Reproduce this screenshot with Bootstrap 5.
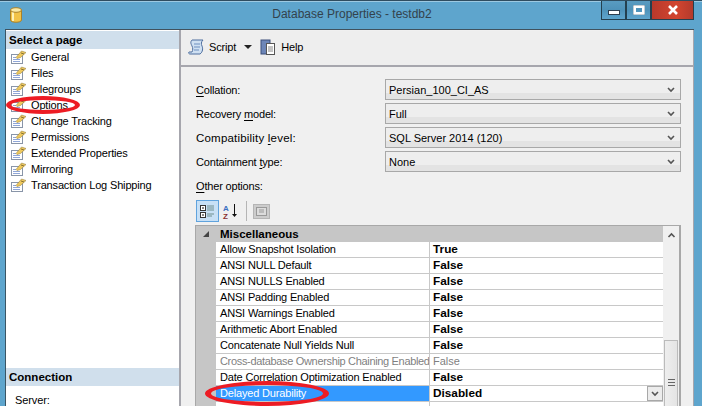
<!DOCTYPE html>
<html lang="en">
<head>
<meta charset="utf-8">
<title>Database Properties - testdb2</title>
<link href="https://cdn.jsdelivr.net/npm/bootstrap@5.3.0/dist/css/bootstrap.min.css" rel="stylesheet">
<style>
html,body{margin:0;height:100%;overflow:hidden;background:#5ea5cd}
body{font:11.5px/16px "Liberation Sans",Arial,sans-serif;color:#000}
.ssms-win{width:702px;height:406px;position:relative;overflow:hidden;background:#5ea5cd;border-top:1px solid #2f4d60;box-shadow:inset 0 1px 0 #9cc9e2}
.ssms-title{height:28px;position:relative;padding-left:10px}
.ssms-cyl{position:absolute;left:10px;top:6px;display:block}
.ssms-title-text{position:absolute;left:2px;right:0;top:5px;text-align:center;font-size:12px;color:#33424c}
.ssms-btns{position:absolute;right:8px;top:-1px;height:20px}
.ssms-btn{height:20px;border:1px solid #24404f;border-top:0;display:flex;align-items:center;justify-content:center}
.ssms-btn-plain{width:25px;background:linear-gradient(#5b9dc2,#4e92b9 50%,#5ea5cd)}
.ssms-btn-close{width:43px;background:linear-gradient(90deg,#b8392b,#d2452f 60%,#b33a2c)}
.ssms-min{margin-top:6px}
.ssms-client{margin-left:5px;width:689px;height:377px;background:#f0f0f0;border-left:1px solid #3a5564;border-top:1px solid #40525e;overflow:hidden}
.ssms-side{width:175px;background:#fff;border-right:2px solid #a6a6ad;flex:none;height:100%;display:flex;flex-direction:column;padding-top:1px}
.ssms-head{height:18px;background:#d0dfec;font-weight:700;font-size:11.5px;line-height:18px;padding-left:3px;flex:none}
.ssms-pages{flex:1;font-size:11px;letter-spacing:-.16px}
.ssms-page{height:16px;display:flex;align-items:center;padding-left:4px;gap:4px;white-space:nowrap}
.ssms-main{flex:1;min-width:0;height:100%;border-right:1px solid #a6a6ad}
.ssms-tools{height:36px;background:#eee;border-bottom:2px solid #a6a6ad;display:flex;align-items:center;padding:0 0 2px 7px;margin-top:1px;font-size:11px;letter-spacing:-.16px}
.ssms-form{padding:12px 12px 0 15px;position:relative}
.ssms-field{height:24px;display:flex;align-items:flex-start}
.ssms-field label{width:189px;flex:none;line-height:22px;margin:0;font-size:11px;letter-spacing:-.17px}
.ssms-field label.ssms-wide{font-size:11.5px;letter-spacing:.2px}
.ssms-select{width:296px;height:21px;background:linear-gradient(#eee 70%,#e3e3e3 70%);border:1px solid #a8a8a8;display:flex;align-items:center;justify-content:space-between;padding:0 5px 0 3px;font-size:11px}
.ssms-other{margin-top:3px;line-height:16px;font-size:11px;letter-spacing:-.17px}
.ssms-gridtools{height:22px;display:flex;align-items:center;margin-top:6px;gap:3px}
.ssms-tbtn{width:23px;height:22px;background:#c7e0f6;border:1px solid #60a3dd;display:flex;align-items:center;justify-content:center}
.ssms-sep{width:1px;height:20px;background:#b5b5b5;margin:0 3px}
.ssms-grid{width:486px;height:200px;margin-left:-1px;border:1px solid #a8a8a8;border-right-width:2px;border-bottom:0;margin-top:3px;display:flex;background:#fff;position:relative;overflow:hidden}
.ssms-gridbody{width:467px;flex:none}
.ssms-ghead{height:16px;background:#c6c6c6;display:flex;align-items:center;font-weight:700;line-height:16px}
.ssms-ghead span{padding-left:4px}
.ssms-gutter{width:20px;flex:none;display:flex;justify-content:center;align-items:center}
.ssms-grow{height:16px;display:flex;background:#c6c6c6}
.ssms-gname{width:214px;flex:none;background:#fff;border-bottom:1px solid #c8c8c8;padding-left:4px;line-height:15px;white-space:nowrap;overflow:hidden;border-right:1px solid #c8c8c8;font-size:11px;letter-spacing:-.17px}
.ssms-gval{flex:1;background:#fff;border-bottom:1px solid #c8c8c8;padding-left:3px;line-height:15px;font-weight:700;position:relative;font-size:11.8px}
.ssms-dim{color:#7f7f7f;font-weight:400}
.ssms-gname.ssms-dim{letter-spacing:-.33px}
.ssms-gval.ssms-dim{font-size:11px}
.ssms-sel{background:#3399ff;color:#fff}
.ssms-dd{position:absolute;right:0;top:0;width:16px;height:15px;background:#ececec;border:1px solid #a8a8a8;display:flex;align-items:center;justify-content:center}
.ssms-scroll{flex:1;background:#f0f0f0;position:relative;display:flex;flex-direction:column;align-items:center}
.ssms-uparrow{margin-top:6px}
.ssms-thumb{position:absolute;left:1px;right:1px;top:114px;bottom:0;background:linear-gradient(90deg,#eee,#e4e4e4);border:1px solid #bbb;display:flex;align-items:center;justify-content:center}
.ssms-thumb b{display:block;width:7px;height:8px;background:repeating-linear-gradient(#666 0 1px,transparent 1px 3px)}
.ssms-oval{position:absolute;border:4px solid #ed1c24;border-radius:50%;pointer-events:none}
.ssms-oval-a{left:6px;top:95px;width:74px;height:18px;border-width:4px 5px}
.ssms-oval-b{left:205px;top:380px;width:124px;height:25px;border-width:4px 6px}
.ssms-conn{padding:6px 0 0 9px;height:20px;overflow:hidden;flex:none;font-size:11px;letter-spacing:-.1px}
u{text-underline-offset:2px}
</style>
</head>
<body>
<svg width="0" height="0" class="d-block position-absolute">
<symbol id="ic-page" viewBox="0 0 17 14">
<rect x="1.5" y="4.5" width="11" height="9" fill="#fff" stroke="#8995a8"/>
<path d="M3 7.5h3M3 9.5h7M3 11.5h7" stroke="#8fa6d8"/>
<path d="M6 7.5l5.5-6.500 4.500 1.500-5.500 5-3.500 1z" fill="#efc95e" stroke="#9a8444" stroke-width=".6"/>
<path d="M11 3l3 1" stroke="#6b5a2a" stroke-width=".8"/>
</symbol>
<symbol id="ic-chev" viewBox="0 0 8 6"><path d="M1 1l3 3 3-3" fill="none" stroke="#555" stroke-width="1.6"/></symbol>
</svg>
<div class="ssms-win">
  <div class="ssms-title">
    <svg width="12" height="16" viewBox="0 0 12 16" class="ssms-cyl"><path d="M.5 3v10c0 3 11 3 11 0V3z" fill="#f2c349" stroke="#a9812a"/><path d="M3 4v10" stroke="#fff2b8" stroke-width="2"/><ellipse cx="6" cy="3" rx="5.5" ry="2.3" fill="#fbe9a4" stroke="#a9812a"/></svg>
    <div class="ssms-title-text">Database Properties - testdb2</div>
    <div class="ssms-btns d-flex">
      <div class="ssms-btn ssms-btn-plain"><svg class="ssms-min" width="12" height="6" viewBox="0 0 12 6"><rect x=".5" y=".5" width="11" height="4" fill="#fff" stroke="#2f4050"/></svg></div>
      <div class="ssms-btn ssms-btn-plain"><svg width="12" height="10" viewBox="0 0 12 10"><rect x="1.500" y="1.500" width="9" height="7" fill="none" stroke="#fff" stroke-width="3"/><rect x="0" y="0" width="12" height="10" fill="none" stroke="#3a5a70" stroke-width=".6"/></svg></div>
      <div class="ssms-btn ssms-btn-close"><svg width="12" height="10" viewBox="0 0 12 10"><path d="M2 1l8 8M10 1L2 9" stroke="#fff" stroke-width="2.6"/></svg></div>
    </div>
  </div>
  <div class="ssms-client d-flex">
    <div class="ssms-side">
      <div class="ssms-head">Select a page</div>
      <div class="ssms-pages">
        <div class="ssms-page"><svg width="17" height="14"><use href="#ic-page"/></svg>General</div>
        <div class="ssms-page"><svg width="17" height="14"><use href="#ic-page"/></svg>Files</div>
        <div class="ssms-page"><svg width="17" height="14"><use href="#ic-page"/></svg>Filegroups</div>
        <div class="ssms-page"><svg width="17" height="14"><use href="#ic-page"/></svg>Options</div>
        <div class="ssms-page"><svg width="17" height="14"><use href="#ic-page"/></svg>Change Tracking</div>
        <div class="ssms-page"><svg width="17" height="14"><use href="#ic-page"/></svg>Permissions</div>
        <div class="ssms-page"><svg width="17" height="14"><use href="#ic-page"/></svg>Extended Properties</div>
        <div class="ssms-page"><svg width="17" height="14"><use href="#ic-page"/></svg>Mirroring</div>
        <div class="ssms-page"><svg width="17" height="14"><use href="#ic-page"/></svg>Transaction Log Shipping</div>
      </div>
      <div class="ssms-head">Connection</div>
      <div class="ssms-conn">Server:</div>
    </div>
    <div class="ssms-main">
      <div class="ssms-tools">
        <svg width="17" height="16" viewBox="0 0 17 16"><path d="M4 1h11c-2 2-2 4-1 6s1 6-2 8H2c-1 0-2-1-1-2h3c1-2 1-4 0-6S2 3 4 1z" fill="#cfe0f2" stroke="#4f6f9f"/><path d="M6 5h6M6 8h6M6 11h5" stroke="#6f8fbf"/></svg>
        <span class="ms-1">Script</span>
        <svg width="8" height="5" viewBox="0 0 8 5" class="ms-2 me-1"><path d="M0 0h8L4 4z" fill="#222"/></svg>
        <svg width="17" height="17" viewBox="0 0 17 17" class="ms-1"><rect x="1" y="1" width="9" height="14" fill="#6d86b8" stroke="#3d4f7a"/><rect x="6.500" y="4.500" width="8" height="11" fill="#fff" stroke="#555"/><path d="M8 8h5M8 10h5M8 12h5" stroke="#888"/></svg>
        <span class="ms-1">Help</span>
      </div>
      <div class="ssms-form">
        <div class="ssms-field"><label><u>C</u>ollation:</label><div class="ssms-select"><span>Persian_100_CI_AS</span><svg width="8" height="6"><use href="#ic-chev"/></svg></div></div>
        <div class="ssms-field"><label>Recovery <u>m</u>odel:</label><div class="ssms-select"><span>Full</span><svg width="8" height="6"><use href="#ic-chev"/></svg></div></div>
        <div class="ssms-field"><label class="ssms-wide">Compatibility <u>l</u>evel:</label><div class="ssms-select"><span>SQL Server 2014 (120)</span><svg width="8" height="6"><use href="#ic-chev"/></svg></div></div>
        <div class="ssms-field"><label>Containment <u>t</u>ype:</label><div class="ssms-select"><span>None</span><svg width="8" height="6"><use href="#ic-chev"/></svg></div></div>
        <div class="ssms-other"><u>O</u>ther options:</div>
        <div class="ssms-gridtools">
          <div class="ssms-tbtn"><svg width="17" height="15" viewBox="0 0 17 15"><rect x="1.500" y="1.500" width="5" height="5" fill="#fff" stroke="#333"/><rect x="1.500" y="8.500" width="5" height="5" fill="#fff" stroke="#333"/><path d="M3 4h2M3 11h2" stroke="#111"/><path d="M8 2h7M8 4h7M8 6h7M8 10h7M8 12h5" stroke="#6f8f8f"/></svg></div>
          <svg width="18" height="17" viewBox="0 0 18 17"><text x="1" y="8" font-size="8" font-weight="700" fill="#3b6fc0" font-family="Liberation Sans">A</text><text x="1" y="16" font-size="8" font-weight="700" fill="#8a3030" font-family="Liberation Sans">Z</text><path d="M12.500 1v12" stroke="#111"/><path d="M10 11h5l-2.500 3z" fill="#111"/></svg>
          <div class="ssms-sep"></div>
          <svg width="17" height="15" viewBox="0 0 17 15"><rect x=".5" y=".5" width="16" height="14" fill="#ccc" stroke="#b5b5b5"/><rect x="3.500" y="3.500" width="10" height="8" fill="#dcdcdc" stroke="#999"/><path d="M6 6h5M6 8h5" stroke="#999"/></svg>
        </div>
        <div class="ssms-grid">
          <div class="ssms-gridbody">
            <div class="ssms-ghead"><div class="ssms-gutter"><svg width="6" height="6" viewBox="0 0 6 6"><path d="M6 0v6H0z" fill="#444"/></svg></div><span>Miscellaneous</span></div>
            <div class="ssms-grow"><div class="ssms-gutter"></div><div class="ssms-gname">Allow Snapshot Isolation</div><div class="ssms-gval">True</div></div>
            <div class="ssms-grow"><div class="ssms-gutter"></div><div class="ssms-gname">ANSI NULL Default</div><div class="ssms-gval">False</div></div>
            <div class="ssms-grow"><div class="ssms-gutter"></div><div class="ssms-gname">ANSI NULLS Enabled</div><div class="ssms-gval">False</div></div>
            <div class="ssms-grow"><div class="ssms-gutter"></div><div class="ssms-gname">ANSI Padding Enabled</div><div class="ssms-gval">False</div></div>
            <div class="ssms-grow"><div class="ssms-gutter"></div><div class="ssms-gname">ANSI Warnings Enabled</div><div class="ssms-gval">False</div></div>
            <div class="ssms-grow"><div class="ssms-gutter"></div><div class="ssms-gname">Arithmetic Abort Enabled</div><div class="ssms-gval">False</div></div>
            <div class="ssms-grow"><div class="ssms-gutter"></div><div class="ssms-gname">Concatenate Null Yields Null</div><div class="ssms-gval">False</div></div>
            <div class="ssms-grow"><div class="ssms-gutter"></div><div class="ssms-gname ssms-dim">Cross-database Ownership Chaining Enabled</div><div class="ssms-gval ssms-dim">False</div></div>
            <div class="ssms-grow"><div class="ssms-gutter"></div><div class="ssms-gname">Date Correlation Optimization Enabled</div><div class="ssms-gval">False</div></div>
            <div class="ssms-grow"><div class="ssms-gutter"></div><div class="ssms-gname ssms-sel">Delayed Durability</div><div class="ssms-gval">Disabled<div class="ssms-dd"><svg width="8" height="6"><use href="#ic-chev"/></svg></div></div></div>
            <div class="ssms-grow"><div class="ssms-gutter"></div><div class="ssms-gname"></div><div class="ssms-gval"></div></div>
          </div>
          <div class="ssms-scroll">
            <svg width="9" height="6" viewBox="0 0 8 6" class="ssms-uparrow"><path d="M1 5l3-3 3 3" fill="none" stroke="#555" stroke-width="1.6"/></svg>
            <div class="ssms-thumb"><b></b></div>
          </div>
        </div>
      </div>
    </div>
  </div>
  <div class="ssms-oval ssms-oval-a"></div>
  <div class="ssms-oval ssms-oval-b"></div>
</div>
</body>
</html>
